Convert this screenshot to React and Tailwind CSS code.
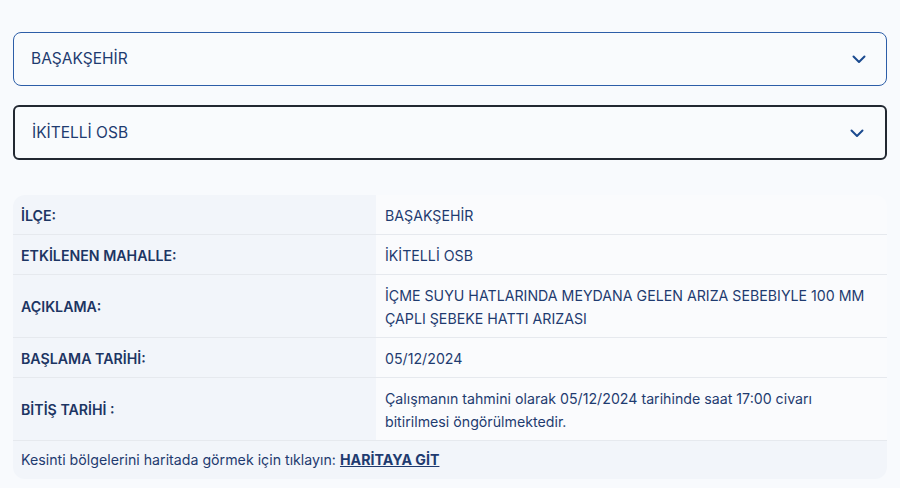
import React from 'react';

const rows = [
  { label: 'İLÇE:', value: 'BAŞAKŞEHİR' },
  { label: 'ETKİLENEN MAHALLE:', value: 'İKİTELLİ OSB' },
  { label: 'AÇIKLAMA:', value: 'İÇME SUYU HATLARINDA MEYDANA GELEN ARIZA SEBEBIYLE 100 MM ÇAPLI ŞEBEKE HATTI ARIZASI' },
  { label: 'BAŞLAMA TARİHİ:', value: '05/12/2024' },
  { label: 'BİTİŞ TARİHİ :', value: 'Çalışmanın tahmini olarak 05/12/2024 tarihinde saat 17:00 civarı bitirilmesi öngörülmektedir.' },
];

function Chevron() {
  return (
    <svg className="w-4 h-4 text-[#1b4a8f]" viewBox="0 0 16 16" fill="none" stroke="currentColor" strokeWidth="2" strokeLinecap="round" strokeLinejoin="round">
      <path d="M2.5 5.5 8 11l5.5-5.5" />
    </svg>
  );
}

function Select({ value, focused }) {
  return (
    <div
      className={
        focused
          ? 'h-[55px] flex items-center justify-between pl-[17px] pr-5 rounded-md border-2 border-[#222831] bg-[#f9fbfd]'
          : 'h-[54px] flex items-center justify-between pl-[17px] pr-[19px] rounded-lg border border-[#2d5ea8] bg-[#f9fbfd]'
      }
    >
      <span className="text-[15.5px] text-[#1f3b70]">{value}</span>
      <Chevron />
    </div>
  );
}

export default function App() {
  return (
    <div className="min-h-screen bg-[#f8fafd] px-[13px] pt-[32px]" style={{ fontFamily: 'Inter, sans-serif' }}>
      <div className="flex flex-col gap-[19px]">
        <Select value="BAŞAKŞEHİR" />
        <Select value="İKİTELLİ OSB" focused />
      </div>

      <div className="mt-[35px] rounded-xl overflow-hidden text-[14.2px] text-[#1f3b70]">
        {rows.map((r) => (
          <div key={r.label} className="grid grid-cols-[363px_1fr] border-b border-[#e6e9ee]">
            <div className="bg-[#f2f5fa] px-2 pt-[9px] pb-[7px] flex items-center font-semibold text-[#1d3563]">
              {r.label}
            </div>
            <div className="bg-[#fafbfd] pl-[9px] pr-[12px] pt-[9px] pb-[7px] leading-[23px]">
              {r.value}
            </div>
          </div>
        ))}
        <div className="bg-[#f2f5fa] px-2 pt-[9px] pb-[10px] leading-[19px]">
          Kesinti bölgelerini haritada görmek için tıklayın:{' '}
          <a href="#" className="font-bold underline">HARİTAYA GİT</a>
        </div>
      </div>
    </div>
  );
}
